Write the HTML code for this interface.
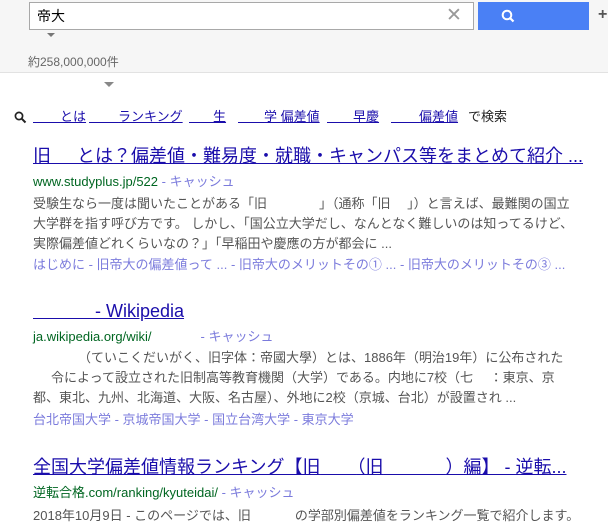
<!DOCTYPE html>
<html><head><meta charset="utf-8"><style>
body{margin:0;width:608px;height:529px;overflow:hidden;background:#fff;font-family:"Liberation Sans","Noto Sans CJK JP",sans-serif;position:relative}
.a{position:absolute;white-space:pre;line-height:1}
.t{font-size:18px;color:#1a0dab;text-decoration:underline;text-decoration-color:#1a0dab}
.u{font-size:13px;color:#006621}
.c{color:#7b7bdc}
.s{font-size:13px;color:#545454}
.l{font-size:13px;color:#7b7bdc}
.r{font-size:13px;color:#1a0dab;text-decoration:underline}
i{display:inline-block;font-style:normal}
b{font-weight:normal}
</style></head><body>
<div style="position:absolute;left:0;top:0;width:608px;height:72px;background:#f6f6f6;border-bottom:1px solid #e2e2e2"></div>
<div style="position:absolute;left:29px;top:2px;width:443px;height:26px;border:1px solid #a8a8a8;background:#fff"></div>
<div class="a" style="left:37px;top:9px;font-size:14px;color:#000">帝大</div>
<div class="a" style="left:446px;top:6px;font-size:19px;color:#999">✕</div>
<div style="position:absolute;left:478px;top:2px;width:111px;height:28px;background:#4a80f5"></div>
<svg style="position:absolute;left:501px;top:9px" width="14" height="14" viewBox="0 0 14 14"><circle cx="6" cy="6" r="4.3" fill="none" stroke="#fff" stroke-width="2"/><line x1="9" y1="9" x2="12.5" y2="12.5" stroke="#fff" stroke-width="2.2"/></svg>
<div class="a" style="left:598px;top:7px;font-size:16px;font-weight:bold;color:#555">+</div>
<div style="position:absolute;left:47px;top:33px;border-left:4px solid transparent;border-right:4px solid transparent;border-top:4px solid #777"></div>
<div class="a" style="left:28px;top:56px;font-size:12px;color:#666">約258,000,000件</div>
<div style="position:absolute;left:104px;top:82px;border-left:5px solid transparent;border-right:5px solid transparent;border-top:5px solid #888"></div>
<svg style="position:absolute;left:14px;top:111px" width="13" height="13" viewBox="0 0 13 13"><circle cx="5" cy="5" r="3.6" fill="none" stroke="#222" stroke-width="1.7"/><line x1="7.6" y1="7.6" x2="11.5" y2="11.5" stroke="#222" stroke-width="2"/></svg>
<div class="a r" style="left:33px;top:110px"><b style="letter-spacing:14px">　</b>とは</div>
<div class="a r" style="left:89px;top:110px"><b style="letter-spacing:16px">　</b>ランキング</div>
<div class="a r" style="left:189px;top:110px"><b style="letter-spacing:11px">　</b>生</div>
<div class="a r" style="left:238px;top:110px"><b style="letter-spacing:13px">　</b>学 偏差値</div>
<div class="a r" style="left:327px;top:110px"><b style="letter-spacing:13px">　</b>早慶</div>
<div class="a r" style="left:391px;top:110px"><b style="letter-spacing:15px">　</b>偏差値</div>
<div class="a" style="left:468px;top:110px;font-size:13px;color:#222">で検索</div>

<div class="a t" style="left:33px;top:147px">旧<b style="letter-spacing:8px">　</b>とは？偏差値・難易度・就職・キャンパス等をまとめて紹介 ...</div>
<div class="a u" style="left:33px;top:175px">www.studyplus.jp/522 <span class="c">- キャッシュ</span></div>
<div class="a s" style="left:33px;top:197px">受験生なら一度は聞いたことがある「旧　　　　」（通称「旧　 」）と言えば、最難関の国立</div>
<div class="a s" style="left:33px;top:217px">大学群を指す呼び方です。 しかし、「国公立大学だし、なんとなく難しいのは知ってるけど、</div>
<div class="a s" style="left:33px;top:237px">実際偏差値どれくらいなの？」「早稲田や慶應の方が都会に ...</div>
<div class="a l" style="left:33px;top:258px">はじめに - 旧帝大の偏差値って ... - 旧帝大のメリットその① ... - 旧帝大のメリットその③ ...</div>

<div class="a t" style="left:33px;top:302px"><b style="letter-spacing:44px">　</b>- Wikipedia</div>
<div class="a u" style="left:33px;top:330px">ja.wikipedia.org/wiki/<i style="width:49px"></i><span class="c">- キャッシュ</span></div>
<div class="a s" style="left:33px;top:351px"><i style="width:45px"></i>（ていこくだいがく、旧字体：帝國大學）とは、1886年（明治19年）に公布された</div>
<div class="a s" style="left:33px;top:371px"><i style="width:18px"></i>令によって設立された旧制高等教育機関（大学）である。内地に7校（七　 ：東京、京</div>
<div class="a s" style="left:33px;top:391px">都、東北、九州、北海道、大阪、名古屋）、外地に2校（京城、台北）が設置され ...</div>
<div class="a l" style="left:33px;top:413px">台北帝国大学 - 京城帝国大学 - 国立台湾大学 - 東京大学</div>

<div class="a t" style="left:33px;top:458px">全国大学偏差値情報ランキング【旧<b style="letter-spacing:18px">　</b>（旧<b style="letter-spacing:44px">　</b>）編】 - 逆転...</div>
<div class="a u" style="left:33px;top:486px">逆転合格.com/ranking/kyuteidai/ <span class="c">- キャッシュ</span></div>
<div class="a s" style="left:33px;top:509px">2018年10月9日 - このページでは、旧<i style="width:44px"></i>の学部別偏差値をランキング一覧で紹介します。</div>
</body></html>
